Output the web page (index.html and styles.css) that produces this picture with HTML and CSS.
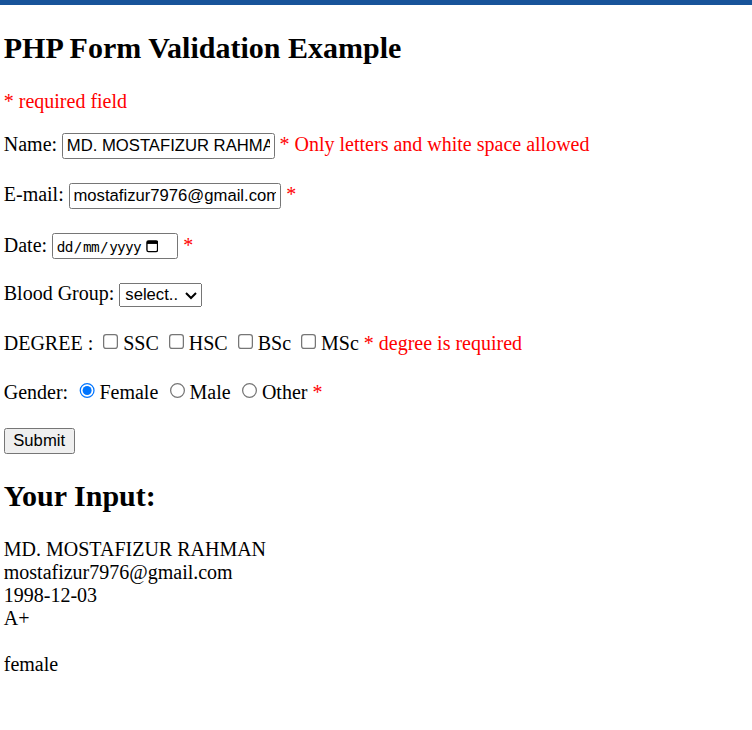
FILE: index.html
```html
<!DOCTYPE html>
<html>
<head>
<meta charset="utf-8">
<title>PHP Form Validation Example</title>
<link rel="stylesheet" href="styles.css">
</head>
<body>
<div class="topbar"></div>
<div class="page">
<h2 class="title">PHP Form Validation Example</h2>
<p><span class="error">* required field</span></p>
<form class="form" onsubmit="return false">
Name: <input class="text" type="text" name="name" value="MD. MOSTAFIZUR RAHMAN"> <span class="error">* Only letters and white space allowed</span>
<br><br>
E-mail: <input class="text" type="text" name="email" value="mostafizur7976@gmail.com"> <span class="error">*</span>
<br><br>
Date: <span class="date">dd<span class="sep">/</span>mm<span class="sep">/</span>yyyy<svg class="cal" width="10" height="10" viewBox="0 0 10 10"><rect x="0.75" y="0.75" width="8.5" height="8.5" rx="1.3" fill="none" stroke="#000" stroke-width="1.1"/><rect x="0.75" y="0.75" width="8.5" height="2.4" fill="#000"/></svg></span> <span class="error">*</span>
<br><br>
Blood Group: <select class="sel" name="blood"><option>select..</option><option>A+</option></select>
<br><br>
DEGREE : <input type="checkbox" name="ssc">SSC <input type="checkbox" name="hsc">HSC <input type="checkbox" name="bsc">BSc <input type="checkbox" name="msc">MSc <span class="error">* degree is required</span>
<br><br>
Gender:
<input type="radio" name="gender" checked>Female
<input type="radio" name="gender">Male
<input type="radio" name="gender">Other
<span class="error">*</span>
<br><br>
<input class="btn" type="submit" name="submit" value="Submit">
</form>
<h2 class="title">Your Input:</h2>
MD. MOSTAFIZUR RAHMAN<br>mostafizur7976@gmail.com<br>1998-12-03<br>A+<br><br>female
</div>
</body>
</html>
```
FILE: styles.css
```css
body {
  margin: 0;
  font-family: "Liberation Serif", "Times New Roman", serif;
  background: #fff;
  color: #000;
}
.topbar {
  height: 5px;
  background: #18549a;
}
.page {
  zoom: 1.25;
  padding: 1px 0 0 3px;
  font-size: 16px;
}
.title {
  font-size: 1.5em;
  margin: 0.83em 0;
}
.error {
  color: #ff0000;
}
.form {
  line-height: 18.8px;
}
.text {
  box-sizing: border-box;
  font-family: "Liberation Sans", Arial, sans-serif;
  font-size: 13.333px;
  width: 170px;
  height: 21px;
  padding: 1px 3px;
  border: 1px solid #767676;
  border-radius: 2px;
}
.date {
  display: inline-block;
  box-sizing: border-box;
  height: 21px;
  width: 101px;
  padding: 4px 3px 1px 3px;
  line-height: 14px;
  border: 1px solid #767676;
  border-radius: 2px;
  font-family: "DejaVu Sans Mono", monospace;
  font-size: 11.5px;
  letter-spacing: -0.6px;
  white-space: nowrap;
}
.sep {
  margin: 0 1px;
}
.cal {
  margin-left: 4px;
  vertical-align: -1px;
}
.sel {
  font-family: "Liberation Sans", Arial, sans-serif;
  font-size: 13.333px;
  width: 66px;
  height: 19px;
}
.btn {
  font-family: "Liberation Sans", Arial, sans-serif;
  font-size: 13.333px;
  height: 21px;
}
```
